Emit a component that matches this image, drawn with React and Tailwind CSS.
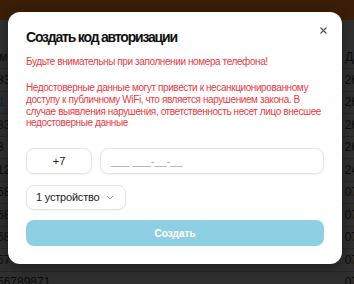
import React from "react";

const rows = [
  { left: "33", right: "26" },
  { left: "1", right: "26", blue: true },
  { left: "33", right: "26" },
  { left: "3", right: "26" },
  { left: "12", right: "24" },
  { left: "68", right: "07" },
  { left: "68", right: "07" },
  { left: "68", right: "07" },
  { left: "57", right: "07" },
  { left: "56789871", right: "07" },
];

const App = () => {
  return (
    <div
      className="relative w-[354px] h-[284px] overflow-hidden bg-[#2f2f2f] text-[#0c0c0c] text-[12px]"
      style={{ fontFamily: '"Liberation Sans", Arial, sans-serif' }}
    >
      {/* Dimmed page behind */}
      <div className="h-[20px] bg-[#3a1e07]" />
      <div className="pt-[26px]">
        <div className="h-[23px] flex items-center justify-between border-b border-[#262626]">
          <span className="ml-[-1px]">м</span>
          <span className="mr-[-6px]">Да</span>
        </div>
        {rows.map((r, i) => (
          <div
            key={i}
            className="h-[22.5px] flex items-center justify-between border-b border-[#262626]"
          >
            <span className={r.blue ? "ml-[-2px] text-[#0b2547]" : "ml-[-3px]"}>{r.left}</span>
            <span className="mr-[-4px]">{r.right}</span>
          </div>
        ))}
      </div>

      {/* Modal */}
      <div className="absolute left-[8px] top-[12px] w-[334px] rounded-[12px] bg-white px-[18px] pt-[15px] pb-[18px] shadow-[0_4px_12px_rgba(0,0,0,0.35)]">
        <div className="flex items-center justify-between">
          <h2 className="text-[14px] leading-[20px] font-bold tracking-[-1.2px] text-[#111]">
            Создать код авторизации
          </h2>
          <button className="-mt-[13px] mr-[-3px]">
            <svg width="7" height="7" viewBox="0 0 7 7" stroke="#555" strokeWidth="1.2">
              <path d="M0.5 0.5l6 6M6.5 0.5l-6 6" />
            </svg>
          </button>
        </div>

        <div className="mt-[9px] text-[10px] leading-[11.7px] tracking-[-0.4px] text-[#ea3a3f]">
          <p>Будьте внимательны при заполнении номера телефона!</p>
          <p className="mt-[14.5px]">
            Недостоверные данные могут привести к несанкционированному доступу к публичному WiFi, что
            является нарушением закона. В случае выявления нарушения, ответственность несет лицо
            внесшее недостоверные данные
          </p>
        </div>

        <div className="mt-[19px] flex gap-[8px]">
          <div className="w-[66px] h-[26px] flex items-center justify-center rounded-[8px] border border-[#e4e4e4] shadow-[0_1px_2px_rgba(0,0,0,0.06)] text-[11px] text-[#222]">
            +7
          </div>
          <div className="flex-1 h-[26px] flex items-center px-[10px] rounded-[8px] border border-[#e4e4e4] shadow-[0_1px_2px_rgba(0,0,0,0.06)] text-[11px] text-[#a8a8a8]">
            ___ ___-__-__
          </div>
        </div>

        <div className="mt-[11px] w-[100px] h-[25px] flex items-center justify-between pl-[9px] pr-[11px] rounded-[8px] border border-[#e4e4e4] shadow-[0_1px_2px_rgba(0,0,0,0.06)] text-[11px] tracking-[-0.2px] text-[#222]">
          <span>1 устройство</span>
          <svg width="8" height="5" viewBox="0 0 8 5" fill="none" stroke="#999" strokeWidth="1">
            <path d="M1 1l3 3 3-3" />
          </svg>
        </div>

        <button className="mt-[10px] w-full h-[26px] rounded-[8px] bg-[#8fcfe3] text-white text-[10px] font-bold">
          Создать
        </button>
      </div>
    </div>
  );
};

export default App;
